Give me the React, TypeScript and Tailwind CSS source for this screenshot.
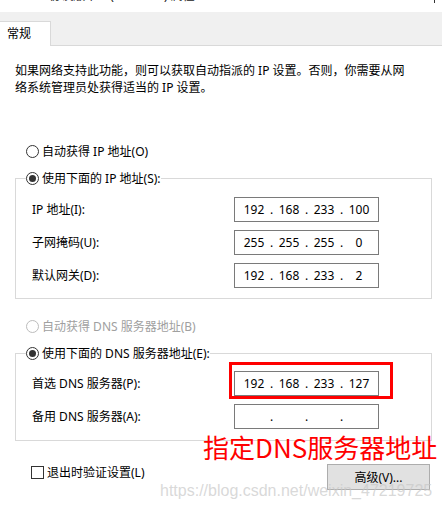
import React from 'react';

const font = 'font-["Noto_Sans","Noto_Sans_CJK_SC",sans-serif]';

function Radio({ checked, disabled }: { checked?: boolean; disabled?: boolean }) {
  return (
    <span
      className={`w-[13px] h-[13px] rounded-full border bg-white flex items-center justify-center shrink-0 ${
        disabled ? 'border-[#bcbcbc]' : 'border-[#333333]'
      }`}
    >
      {checked && <span className="w-[7px] h-[7px] rounded-full bg-[#333333]" />}
    </span>
  );
}

function RadioLabel({ label, checked, disabled }: { label: string; checked?: boolean; disabled?: boolean }) {
  return (
    <div className={`flex items-center gap-[3px] leading-[17px] ${disabled ? 'text-[#a0a0a0]' : 'text-black'}`}>
      <Radio checked={checked} disabled={disabled} />
      <span>{label}</span>
    </div>
  );
}

function IpBox({ parts }: { parts: string[] }) {
  return (
    <div className="w-[145px] h-[25px] border border-[#7a7a7a] bg-white flex items-center pl-[5px] leading-[17px]">
      {parts.map((p, i) => (
        <React.Fragment key={i}>
          {i > 0 && <span className="w-[7px] text-center">.</span>}
          <span className="w-[28px] text-center">{p}</span>
        </React.Fragment>
      ))}
    </div>
  );
}

function Row({ label, parts }: { label: string; parts: string[] }) {
  return (
    <div className="flex items-center pl-[16px]">
      <span className="w-[202px] leading-[17px]">{label}</span>
      <IpBox parts={parts} />
    </div>
  );
}

export default function App() {
  return (
    <div className={`relative w-[442px] h-[510px] bg-white overflow-hidden text-[12px] text-black ${font}`}>
      {/* cut-off window title */}
      <div className="h-[12px] overflow-hidden relative">
        <div className="mt-[-13px] leading-[17px] whitespace-nowrap text-[#222]">Internet 协议版本 4 (TCP/IPv4) 属性</div>
        <span className="absolute right-[7px] top-0 w-[1px] h-[3px] bg-[#333]" />
      </div>

      {/* tabs */}
      <div className="h-[34px] bg-[#f0f0f0] border-b border-[#d9d9d9] flex items-end">
        <div className="h-[25px] w-[51px] bg-white border-t border-r border-[#d9d9d9] mb-[-1px] pl-[7px] leading-[23px]">
          常规
        </div>
      </div>

      <div className="px-[15px]">
        <p className="mt-[16px] leading-[17px]">
          如果网络支持此功能，则可以获取自动指派的 IP 设置。否则，你需要从网
          <br />
          络系统管理员处获得适当的 IP 设置。
        </p>

        <div className="mt-[47px] pl-[11px]">
          <RadioLabel label="自动获得 IP 地址(O)" />
        </div>

        <fieldset className="mt-[10px] w-[417px] border border-[#d9d9d9] pb-[10px]">
          <legend className="ml-[10px]">
            <RadioLabel label="使用下面的 IP 地址(S):" checked />
          </legend>
          <div className="mt-[10px] flex flex-col gap-[8px]">
            <Row label="IP 地址(I):" parts={['192', '168', '233', '100']} />
            <Row label="子网掩码(U):" parts={['255', '255', '255', '0']} />
            <Row label="默认网关(D):" parts={['192', '168', '233', '2']} />
          </div>
        </fieldset>

        <div className="mt-[19px] pl-[11px]">
          <RadioLabel label="自动获得 DNS 服务器地址(B)" disabled />
        </div>

        <fieldset className="mt-[10px] w-[417px] border border-[#d9d9d9] pb-[11px]">
          <legend className="ml-[10px]">
            <RadioLabel label="使用下面的 DNS 服务器地址(E):" checked />
          </legend>
          <div className="mt-[9px] flex flex-col gap-[8px]">
            <Row label="首选 DNS 服务器(P):" parts={['192', '168', '233', '127']} />
            <Row label="备用 DNS 服务器(A):" parts={['', '', '', '']} />
          </div>
        </fieldset>

        <div className="mt-[23px] flex items-start justify-between pr-[-3px]">
          <div className="flex items-center gap-[3px] pl-[16px] leading-[17px]">
            <span className="w-[13px] h-[13px] border border-[#333333] bg-white" />
            <span>退出时验证设置(L)</span>
          </div>
          <button className="w-[103px] h-[26px] mr-[-3px] bg-[#e1e1e1] border border-[#adadad] leading-[17px]">
            高级(V)...
          </button>
        </div>
      </div>

      {/* annotation overlay */}
      <div className="absolute left-[229px] top-[362px] w-[164px] h-[37px] border-[3px] border-[#ff0000]" />
      <div className="absolute left-[203px] top-[429px] text-[26px] leading-[36px] text-[#ff0000] whitespace-nowrap font-['Noto_Sans_CJK_SC',sans-serif]">
        指定DNS服务器地址
      </div>

      {/* watermark */}
      <div className="absolute left-[160px] top-[483px] text-[16px] leading-[16px] text-[#c8c8c8]/70 whitespace-nowrap font-['Liberation_Sans',Arial,sans-serif]">
        https://blog.csdn.net/weixin_47219725
      </div>
    </div>
  );
}
